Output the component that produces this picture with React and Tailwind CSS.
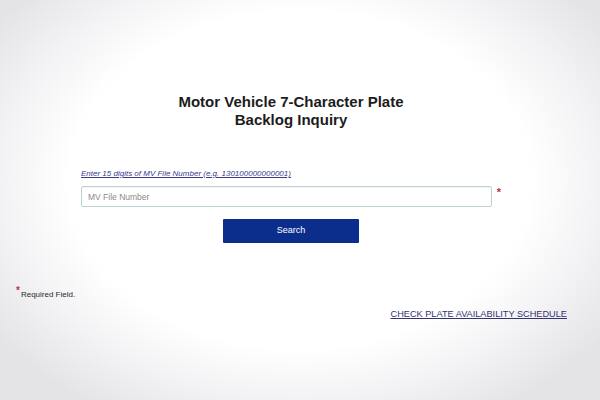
import React from "react";

export default function App() {
  return (
    <div
      className="w-[600px] h-[400px] overflow-hidden bg-[radial-gradient(ellipse_62%_68%_at_50%_45%,#ffffff_62%,#f3f3f5_80%,#e4e4e7_100%)] text-[#1a1a1a]"
      style={{ fontFamily: '"Liberation Sans", Arial, sans-serif' }}
    >
      <div className="pl-[81px] pt-[93px]">
        <div className="w-[420px] flex flex-col">
          <h1 className="text-center text-[15px] leading-[18px] font-bold text-[#1c1c1c]">
            Motor Vehicle 7-Character Plate
            <br />
            Backlog Inquiry
          </h1>

          <a
            href="#"
            className="mt-[40px] text-[8px] leading-[10px] italic underline text-[#3a3a8c]"
          >
            Enter 15 digits of MV File Number (e.g. 130100000000001)
          </a>

          <div className="mt-[7px] flex items-start">
            <input
              type="text"
              placeholder="MV File Number"
              className="w-[411px] h-[21px] rounded-[2px] border border-[#bcd2d4] bg-white px-[6px] text-[8.5px] text-[#333] placeholder:text-[#8a8a8a] outline-none shadow-[inset_0_1px_1px_rgba(0,0,0,0.05)]"
            />
            <span className="ml-[5px] mt-[1px] text-[11px] leading-[10px] font-bold text-[#c0304a]">*</span>
          </div>

          <div className="mt-[12px] flex justify-center">
            <button className="w-[136px] h-[24px] bg-[#0b2d8c] text-white text-[9px] rounded-[1px]">
              Search
            </button>
          </div>
        </div>
      </div>

      <div className="mt-[43px] pl-[16px] flex items-start">
        <span className="text-[10px] leading-[10px] font-bold text-[#c0304a]">*</span>
        <span className="ml-[1px] mt-[4px] text-[8px] leading-[10px] text-[#2a2a2a]">
          Required Field.
        </span>
      </div>

      <div className="mt-[9px] pr-[33px] flex justify-end">
        <a href="#" className="text-[9.2px] leading-[11px] underline text-[#33336e]">
          CHECK PLATE AVAILABILITY SCHEDULE
        </a>
      </div>
    </div>
  );
}
